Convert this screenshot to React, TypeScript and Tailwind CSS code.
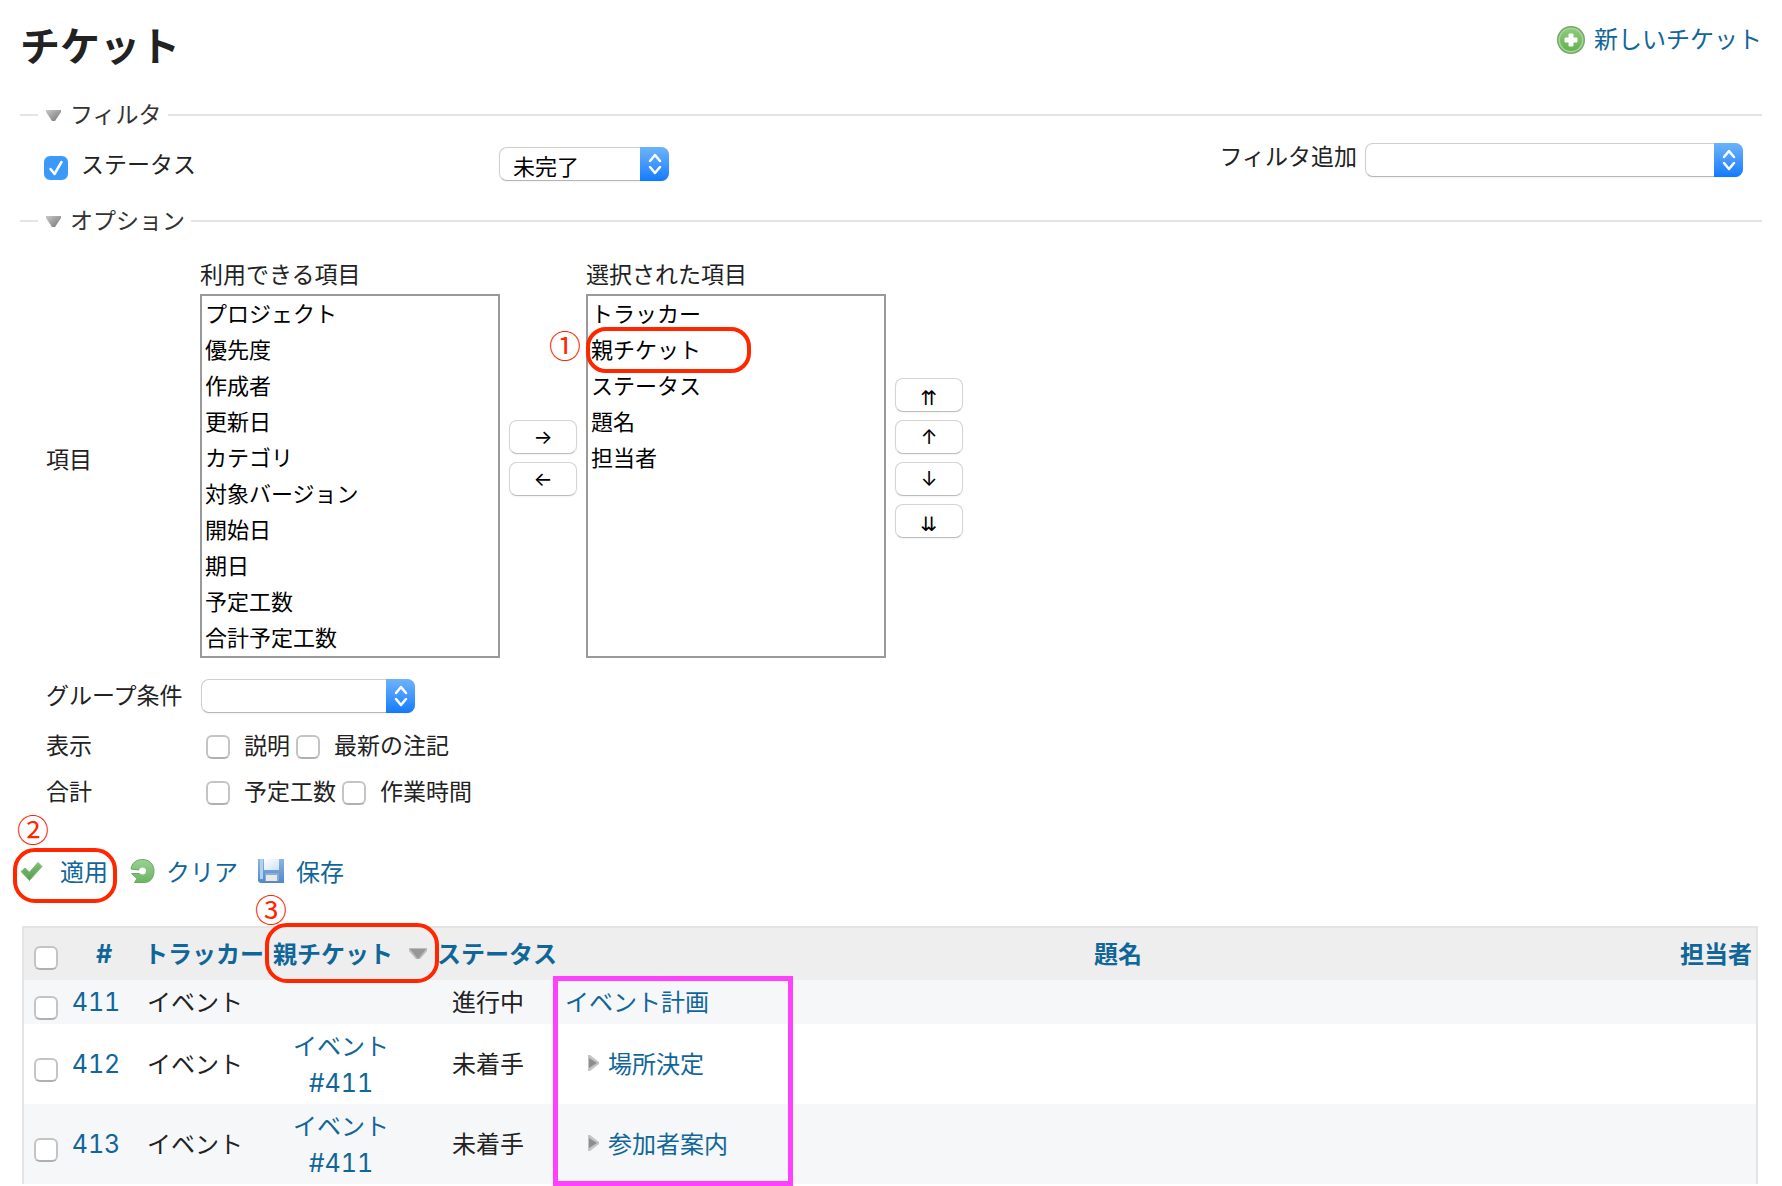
import React, { useState } from "react";

const availableColumns = [
  "プロジェクト",
  "優先度",
  "作成者",
  "更新日",
  "カテゴリ",
  "対象バージョン",
  "開始日",
  "期日",
  "予定工数",
  "合計予定工数",
];

const selectedColumns = ["トラッカー", "親チケット", "ステータス", "題名", "担当者"];

interface Issue {
  id: number;
  tracker: string;
  parent?: number;
  status: string;
  subject: string;
}

const issues: Issue[] = [
  { id: 411, tracker: "イベント", status: "進行中", subject: "イベント計画" },
  { id: 412, tracker: "イベント", parent: 411, status: "未着手", subject: "場所決定" },
  { id: 413, tracker: "イベント", parent: 411, status: "未着手", subject: "参加者案内" },
];

const AddIcon = () => (
  <svg width="28" height="28" viewBox="0 0 28 28" aria-hidden="true">
    <defs>
      <linearGradient id="addFill" x1="0" y1="0" x2="0" y2="1">
        <stop offset="0" stopColor="#8fc97c" />
        <stop offset="1" stopColor="#63b350" />
      </linearGradient>
    </defs>
    <circle cx="14" cy="14" r="14" fill="#74a866" />
    <circle cx="14" cy="14" r="12.5" fill="#a9d69a" />
    <circle cx="14" cy="14" r="11" fill="url(#addFill)" />
    <path d="M12 8h4v4h4v4h-4v4h-4v-4H8v-4h4z" fill="#fff" stroke="#fff" strokeLinejoin="round" />
  </svg>
);

const CheckIcon = () => (
  <svg width="24" height="24" viewBox="0 0 24 24" aria-hidden="true">
    <defs>
      <linearGradient id="checkFill" x1="0" y1="0" x2="0" y2="1">
        <stop offset="0" stopColor="#7cc274" />
        <stop offset="1" stopColor="#559c4e" />
      </linearGradient>
    </defs>
    <path
      d="M1 12.500L5 9l4.500 4L18 3.500 22 7.500 9.500 21.500z"
      fill="url(#checkFill)"
      stroke="#82ba7b"
      strokeLinejoin="round"
    />
  </svg>
);

const ReloadIcon = () => (
  <svg width="26" height="24" viewBox="0 0 26 24" aria-hidden="true">
    <defs>
      <linearGradient id="reloadFill" x1="0" y1="0" x2="0" y2="1">
        <stop offset="0" stopColor="#9ad193" />
        <stop offset="1" stopColor="#6ab562" />
      </linearGradient>
    </defs>
    <path
      d="M1 10C2 4 6 .5 12.500 .5S24 5 24 12s-4 11.500-9.500 11.500H4.500L7 19.500l-5.500-5H12.500a2.500 2.500 0 1 0-3.500-3.500z"
      fill="url(#reloadFill)"
      stroke="#6aa964"
      strokeLinejoin="round"
    />
    <circle cx="12.500" cy="12" r="3.500" fill="#fff" />
  </svg>
);

const SaveIcon = () => (
  <svg width="26" height="24" viewBox="0 0 26 24" aria-hidden="true">
    <defs>
      <linearGradient id="saveBody" x1="0" y1="0" x2="0" y2="1">
        <stop offset="0" stopColor="#8db4e3" />
        <stop offset="1" stopColor="#5287c8" />
      </linearGradient>
      <linearGradient id="savePaper" x1="0" y1="0" x2="1" y2="1">
        <stop offset="0" stopColor="#ffffff" />
        <stop offset="1" stopColor="#cfe1f7" />
      </linearGradient>
    </defs>
    <path d="M0 0h26v24H2l-2-2z" fill="url(#saveBody)" />
    <path d="M2 0h3v20H2z" fill="#b4cff0" />
    <path d="M6 0h15v11H6z" fill="url(#savePaper)" />
    <path d="M7 14h14v8H7z" fill="#84ace0" />
    <path d="M8 16h11v6H8z" fill="#e9e9e4" />
  </svg>
);

const DownTriangle = () => (
  <svg width="15" height="11" viewBox="0 0 15 11" aria-hidden="true">
    <defs>
      <linearGradient id="downFill" x1="0" y1="0" x2="1" y2="1">
        <stop offset="0" stopColor="#c8c8c8" />
        <stop offset="1" stopColor="#757575" />
      </linearGradient>
    </defs>
    <path d="M0 0h15v2L9 11H6L0 2z" fill="url(#downFill)" />
  </svg>
);

const RightTriangle = () => (
  <svg width="11" height="16" viewBox="0 0 11 16" aria-hidden="true">
    <path d="M0 0h2l9 7v2l-9 7H0z" fill="#c4c4c4" />
    <path d="M1 3l8 5-8 5z" fill="#8e8e8e" />
  </svg>
);

const Checkbox = (props: React.InputHTMLAttributes<HTMLInputElement>) => (
  <span className="relative flex size-6 shrink-0">
    <input
      type="checkbox"
      className="peer size-6 appearance-none rounded-md border-2 border-[#c4c4c4] border-b-[#b0b0b0] bg-white checked:border-[#3b99fc] checked:bg-[#3b99fc]"
      {...props}
    />
    <svg
      className="pointer-events-none absolute inset-0 hidden peer-checked:block"
      viewBox="0 0 24 24"
      fill="none"
      stroke="#fff"
      strokeWidth="2.500"
      strokeLinecap="round"
      strokeLinejoin="round"
      aria-hidden="true"
    >
      <path d="M6.500 13l4 5L17.500 6" />
    </svg>
  </span>
);

interface DropdownProps {
  id: string;
  width: string;
  label?: string;
  options: string[];
}

const Dropdown = ({ id, width, label, options }: DropdownProps) => (
  <span className={`relative flex h-[34px] ${width}`}>
    <select
      id={id}
      aria-label={label}
      className="size-full appearance-none rounded-lg border border-[#cfcfcf] border-b-[#b5b5b5] bg-white pt-[2px] pl-[13px] text-[22px] leading-7 text-black shadow-xs"
    >
      {options.map((option) => (
        <option key={option}>{option}</option>
      ))}
    </select>
    <span className="pointer-events-none absolute inset-y-0 right-0 flex w-[29px] items-center justify-center rounded-r-lg bg-linear-to-b from-[#6cb3fa] to-[#0a7aff]">
      <svg
        width="14"
        height="22"
        viewBox="0 0 14 22"
        fill="none"
        stroke="#fff"
        strokeWidth="2.500"
        strokeLinecap="round"
        strokeLinejoin="round"
        aria-hidden="true"
      >
        <path d="M2 8l5-6 5 6M2 14l5 6 5-6" />
      </svg>
    </span>
  </span>
);

const ListBox = ({ id, label, items }: { id: string; label: string; items: string[] }) => (
  <div className="flex w-[300px] flex-col">
    <label htmlFor={id} className="h-[37px] leading-8">
      {label}
    </label>
    <select
      id={id}
      multiple
      size={10}
      className="h-[364px] overflow-hidden border-2 border-[#999] bg-white text-[22px] text-black"
    >
      {items.map((item) => (
        <option key={item} className="h-9 px-[3px] py-0 leading-[34px]">
          {item}
        </option>
      ))}
    </select>
  </div>
);

const MoveButton = ({ label, children }: { label: string; children: React.ReactNode }) => (
  <button
    type="button"
    aria-label={label}
    className="flex h-[34px] w-[68px] items-center justify-center rounded-lg border border-[#d4d4d4] border-b-[#bbb] bg-white font-[Inter,'DejaVu_Sans',sans-serif] text-[20px] leading-none text-black shadow-xs"
  >
    {children}
  </button>
);

const Legend = ({ children }: { children: React.ReactNode }) => (
  <legend className="ml-[18px] pr-[6px] pl-2">
    <button type="button" className="flex h-9 items-center gap-[9px] text-[#333]">
      <DownTriangle />
      <span className="pb-[3px]">{children}</span>
    </button>
  </legend>
);

const CheckboxRow = ({ title, names }: { title: string; names: string[] }) => (
  <>
    <span className="w-[160px]">{title}</span>
    <div className="flex gap-[6px]">
      {names.map((name) => (
        <label key={name} className="flex items-center gap-[14px]">
          <span className="pt-[6px]">
            <Checkbox />
          </span>
          {name}
        </label>
      ))}
    </div>
  </>
);

const linkStyle = "text-[#169] hover:underline";
const numberFont = "font-[Inter,sans-serif] text-[25px] tabular-nums";

const App = () => {
  const [statusFilter, setStatusFilter] = useState<boolean>(true);

  return (
    <div className="min-h-screen overflow-hidden bg-white px-5 pt-[14px] font-['Noto_Sans_CJK_JP',sans-serif] text-[23px] text-[#222]">
      <header className="flex items-start justify-between">
        <h2 className="text-[40px] leading-[60px] font-bold">チケット</h2>
        <a href="#new" className={`mt-[6px] flex items-center gap-[9px] text-2xl ${linkStyle}`}>
          <span className="pt-1">
            <AddIcon />
          </span>
          <span className="leading-9">新しいチケット</span>
        </a>
      </header>

      <fieldset className="mt-[23px] border-t-2 border-[#e4e4e4]">
        <Legend>フィルタ</Legend>
        <div className="flex items-start justify-between pt-2 pr-[19px] pb-[22px] pl-6">
          <div className="mt-1 flex items-start leading-9">
            <label className="flex w-[455px] items-start gap-[13px]">
              <span className="mt-[11px]">
                <Checkbox
                  checked={statusFilter}
                  onChange={(e) => setStatusFilter(e.target.checked)}
                />
              </span>
              ステータス
            </label>
            <span className="mt-[2px]">
              <Dropdown id="status" label="ステータス" width="w-[170px]" options={["未完了"]} />
            </span>
          </div>
          <div className="flex items-start gap-2">
            <label htmlFor="addFilter" className="leading-7">
              フィルタ追加
            </label>
            <span className="mt-[2px]">
              <Dropdown id="addFilter" width="w-[378px]" options={[""]} />
            </span>
          </div>
        </div>
      </fieldset>

      <fieldset className="border-t-2 border-[#e4e4e4]">
        <Legend>オプション</Legend>
        <div className="pl-[26px]">
          <div className="flex items-center pt-[18px] leading-9">
            <span className="w-[154px]">項目</span>
            <div className="flex items-center gap-[9px]">
              <ListBox id="available" label="利用できる項目" items={availableColumns} />
              <div className="flex flex-col gap-2">
                <MoveButton label="追加">→</MoveButton>
                <MoveButton label="削除">←</MoveButton>
              </div>
              <div className="relative">
                <ListBox id="selected" label="選択された項目" items={selectedColumns} />
                <span className="pointer-events-none absolute top-[70px] left-0 h-[46px] w-[165px] rounded-[20px] border-4 border-[#ff2600]" />
                <span className="pointer-events-none absolute top-[69px] -left-[37px] text-[32px] text-[#ff2600]">
                  ①
                </span>
              </div>
              <div className="flex flex-col gap-2">
                <MoveButton label="一番上へ">
                  <span className="pt-[6px]">⇈</span>
                </MoveButton>
                <MoveButton label="上へ">↑</MoveButton>
                <MoveButton label="下へ">↓</MoveButton>
                <MoveButton label="一番下へ">
                  <span className="pt-[6px]">⇊</span>
                </MoveButton>
              </div>
            </div>
          </div>
          <div className="mt-[21px] flex h-[34px] items-center">
            <label htmlFor="groupBy" className="w-[155px] pb-1">
              グループ条件
            </label>
            <Dropdown id="groupBy" width="w-[214px]" options={[""]} />
          </div>
          <div className="mt-[11px] flex h-11 items-center pb-1">
            <CheckboxRow title="表示" names={["説明", "最新の注記"]} />
          </div>
          <div className="flex h-12 items-center pb-1">
            <CheckboxRow title="合計" names={["予定工数", "作業時間"]} />
          </div>
        </div>
      </fieldset>

      <div className="mt-[37px] flex text-2xl leading-9">
        <div className="relative w-[110px]">
          <a href="#apply" className={`flex items-center gap-4 ${linkStyle}`}>
            <CheckIcon />
            適用
          </a>
          <span className="pointer-events-none absolute -top-[5px] -left-[7px] h-[55px] w-[104px] rounded-[22px] border-4 border-[#ff2600]" />
          <span className="pointer-events-none absolute -top-[43px] -left-[3px] text-[32px] text-[#ff2600]">
            ②
          </span>
        </div>
        <a href="#clear" className={`flex w-32 items-center gap-[10px] ${linkStyle}`}>
          <ReloadIcon />
          クリア
        </a>
        <a href="#save" className={`flex items-center gap-3 ${linkStyle}`}>
          <SaveIcon />
          保存
        </a>
      </div>

      <div className="mt-[37px] mr-1 ml-[2px] border-2 border-b-0 border-[#e4e4e4]">
        <table className="w-full table-fixed text-center text-2xl leading-9">
          <colgroup>
            <col className="w-[42px]" />
            <col className="w-[76px]" />
            <col className="w-[124px]" />
            <col className="w-[168px]" />
            <col className="w-[126px]" />
            <col />
            <col className="w-[80px]" />
          </colgroup>
          <thead>
            <tr className="h-[52px] bg-[#eee] whitespace-nowrap text-[#169]">
              <th className="pt-2 pl-[10px]">
                <Checkbox aria-label="すべて選択" />
              </th>
              <th className={numberFont}>
                <a href="#id">#</a>
              </th>
              <th className="pb-[2px]">
                <a href="#tracker">トラッカー</a>
              </th>
              <th className="relative pb-[2px]">
                <a href="#parent" className="inline-flex items-center gap-4 align-top">
                  親チケット
                  <svg width="18" height="11" viewBox="0 0 18 11" aria-hidden="true">
                    <path d="M0 0h18v3l-7 8H7L0 3z" fill="#bcbcbc" />
                    <path d="M1 1h16L9 11z" fill="#979797" />
                  </svg>
                </a>
                <span className="pointer-events-none absolute -top-[5px] -left-[1px] h-[60px] w-[174px] rounded-[22px] border-4 border-[#ff2600]" />
                <span className="pointer-events-none absolute -top-[38px] -left-[11px] text-[32px] font-normal text-[#ff2600]">
                  ③
                </span>
              </th>
              <th className="pb-[2px]">
                <a href="#status">ステータス</a>
              </th>
              <th className="pb-[2px]">
                <a href="#subject">題名</a>
              </th>
              <th className="pb-[2px]">
                <a href="#assignee">担当者</a>
              </th>
            </tr>
          </thead>
          <tbody>
            {issues.map((issue, index) => (
              <tr key={issue.id} className="odd:bg-[#f6f7f9] even:bg-white">
                <td className="pt-3 pl-[10px]">
                  <Checkbox aria-label={`#${issue.id}`} />
                </td>
                <td className={`pr-5 pl-1 ${numberFont}`}>
                  <a href={`#${issue.id}`} className={linkStyle}>
                    {issue.id}
                  </a>
                </td>
                <td className="pr-[18px] pb-[2px]">{issue.tracker}</td>
                <td className="pt-[3px] pr-[18px] pb-[1px]">
                  {issue.parent && (
                    <a href={`#${issue.parent}`} className={`block ${linkStyle}`}>
                      {issue.tracker}
                      <span className={`block leading-10 ${numberFont}`}>#{issue.parent}</span>
                    </a>
                  )}
                </td>
                <td className="pr-[18px] pb-[2px]">{issue.status}</td>
                <td className="relative pt-[3px] pb-[5px] pl-[5px] text-left">
                  <a
                    href={`#${issue.id}`}
                    className={`inline-flex items-center gap-[9px] align-top ${issue.parent ? "pl-[23px]" : ""} ${linkStyle}`}
                  >
                    {issue.parent && <RightTriangle />}
                    {issue.subject}
                  </a>
                  {index === 0 && (
                    <span className="pointer-events-none absolute -top-1 -left-[7px] z-10 h-[210px] w-[240px] border-[5px] border-[#ff40ff]" />
                  )}
                </td>
                <td />
              </tr>
            ))}
          </tbody>
        </table>
      </div>
    </div>
  );
};

export default App;
